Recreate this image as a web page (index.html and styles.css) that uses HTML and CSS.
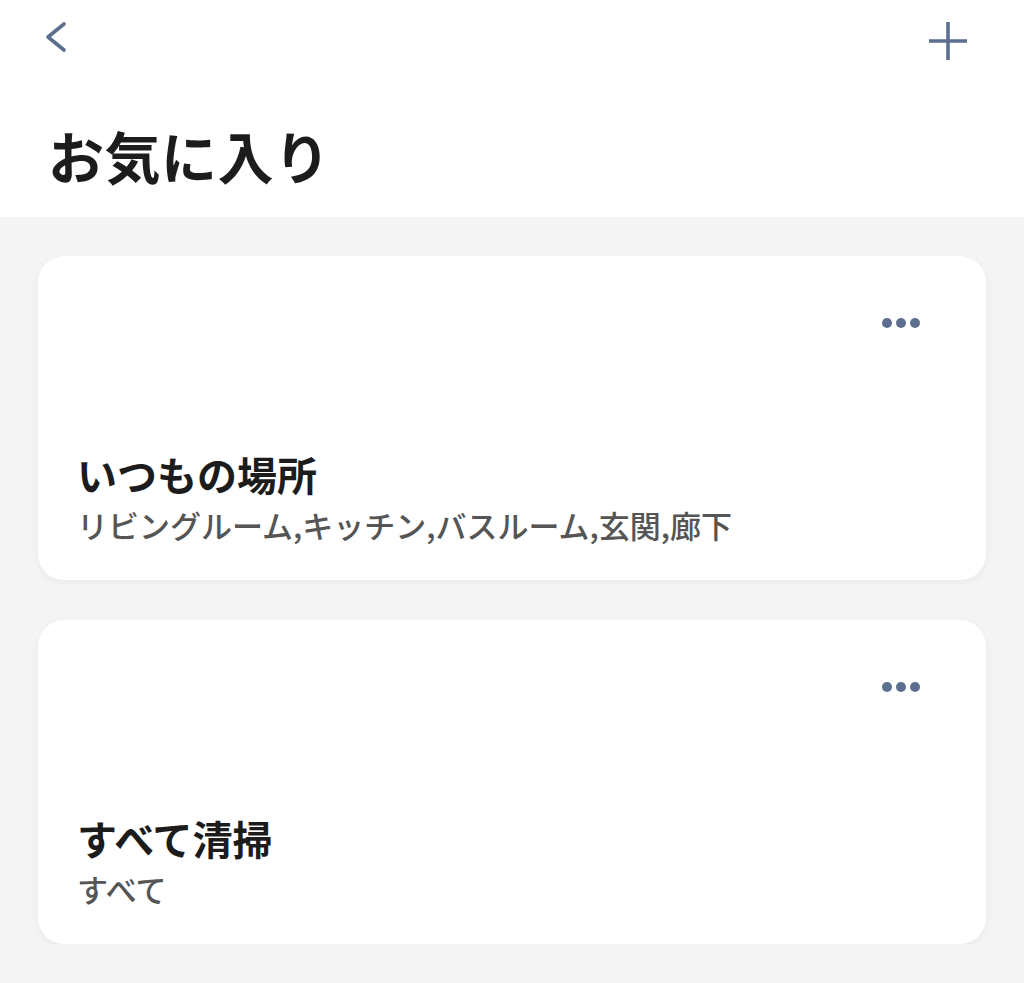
FILE: index.html
```html
<!DOCTYPE html>
<html lang="ja">

<head>
    <meta charset="UTF-8">
    <meta name="viewport" content="width=device-width, initial-scale=1.0">
    <title>お気に入り</title>
    <link rel="stylesheet" href="styles.css">
</head>

<body>
    <header class="header">
        <div class="topbar">
            <button class="icon-button back-button" type="button" aria-label="戻る">
                <svg width="24" height="34" viewBox="0 0 24 34">
                    <path d="M20 3 L4 16 L20 29" fill="none" stroke="currentColor" stroke-width="3.6" stroke-linecap="round" stroke-linejoin="round" />
                </svg>
            </button>
            <button class="icon-button add-button" type="button" aria-label="追加">
                <svg width="40" height="40" viewBox="0 0 40 40">
                    <path d="M20 1 V39 M1 20 H39" fill="none" stroke="currentColor" stroke-width="3.6" />
                </svg>
            </button>
        </div>
        <h1 class="page-title">お気に入り</h1>
    </header>

    <main class="favorites">
        <div class="fav-card">
            <div class="card-top">
                <button class="more-button" type="button" aria-label="その他">
                    <span class="dot"></span><span class="dot"></span><span class="dot"></span>
                </button>
            </div>
            <div class="card-text">
                <h2 class="card-title">いつもの場所</h2>
                <p class="card-rooms">リビングルーム,キッチン,バスルーム,玄関,廊下</p>
            </div>
        </div>

        <div class="fav-card">
            <div class="card-top">
                <button class="more-button" type="button" aria-label="その他">
                    <span class="dot"></span><span class="dot"></span><span class="dot"></span>
                </button>
            </div>
            <div class="card-text">
                <h2 class="card-title">すべて清掃</h2>
                <p class="card-rooms">すべて</p>
            </div>
        </div>
    </main>
</body>

</html>
```

FILE: styles.css
```css
body {
    margin: 0;
    font-family: "Noto Sans CJK JP", "Noto Sans", sans-serif;
    background-color: #f4f4f4;
    color: #1c1c1c;
}

.header {
    background-color: #fff;
    height: 217px;
}

.topbar {
    display: flex;
    justify-content: space-between;
    align-items: flex-start;
    height: 120px;
    padding: 0 56px 0 44px;
}

.icon-button {
    background: transparent;
    border: none;
    padding: 0;
    color: #5c6f8e;
    cursor: pointer;
}

.icon-button svg {
    display: block;
}

.back-button {
    margin-top: 21px;
}

.add-button {
    margin-top: 21px;
}

.page-title {
    margin: 0;
    padding-left: 48px;
    font-size: 56px;
    font-weight: 700;
    line-height: 70px;
    letter-spacing: 0.5px;
}

.favorites {
    display: flex;
    flex-direction: column;
    gap: 40px;
    padding: 39px 38px 0;
}

.fav-card {
    display: flex;
    flex-direction: column;
    justify-content: space-between;
    height: 324px;
    box-sizing: border-box;
    padding: 62px 66px 34px 39px;
    border-radius: 26px;
    background-color: #fff;
    box-shadow: 0 2px 6px rgba(0, 0, 0, 0.05);
}

.card-top {
    display: flex;
    justify-content: flex-end;
}

.more-button {
    display: flex;
    gap: 4px;
    background: transparent;
    border: none;
    padding: 0;
    cursor: pointer;
}

.dot {
    width: 10px;
    height: 10px;
    border-radius: 50%;
    background-color: #5c6f8e;
}

.card-title {
    margin: 0;
    font-size: 40px;
    font-weight: 700;
    line-height: 50px;
}

.card-rooms {
    margin: 5px 0 0;
    font-size: 31px;
    font-weight: 500;
    line-height: 42px;
    color: #555;
}
```
